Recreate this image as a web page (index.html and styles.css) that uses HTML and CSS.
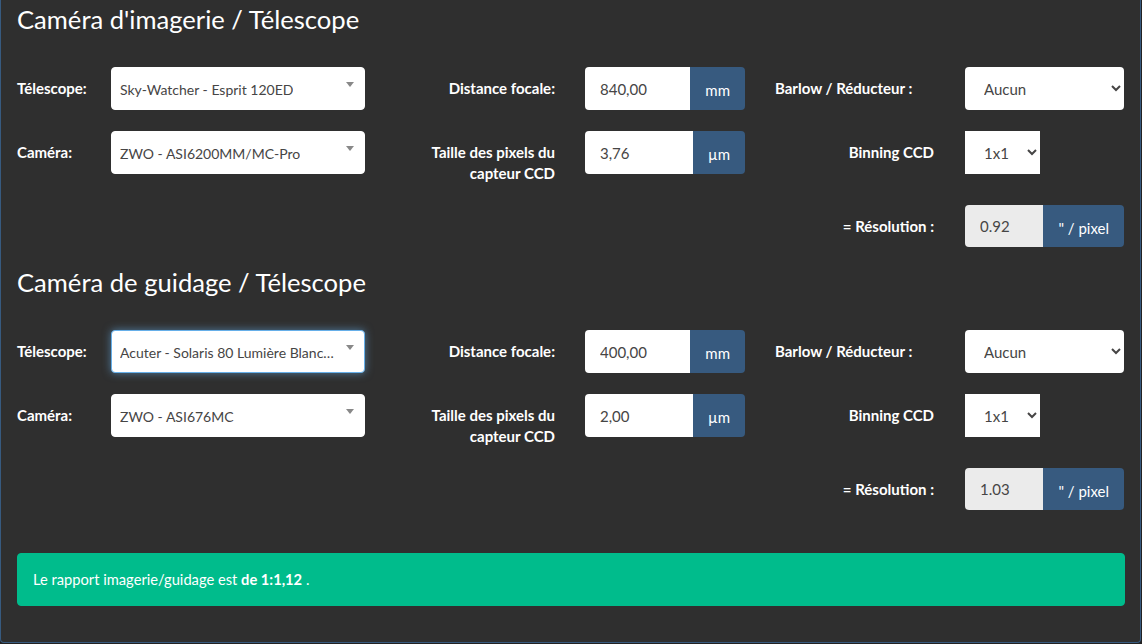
FILE: index.html
```html
<!DOCTYPE html>
<html lang="fr">
<head>
    <meta charset="UTF-8">
    <meta name="viewport" content="width=device-width, initial-scale=1.0">
    <title>Rapport imagerie / guidage</title>
    <link rel="stylesheet" href="styles.css">
</head>
<body>
    <div class="panel">
        <!-- Train d'imagerie -->
        <div class="section">
            <h3>Caméra d'imagerie / Télescope</h3>
            <div class="form-row">
                <label class="label-left">Télescope:</label>
                <div class="combo"><span class="combo-text">Sky-Watcher - Esprit 120ED</span><b class="combo-arrow"></b></div>
                <label class="label-mid">Distance focale:</label>
                <div class="input-group">
                    <input type="text" value="840,00">
                    <span class="addon">mm</span>
                </div>
                <label class="label-right label-barlow">Barlow / Réducteur :</label>
                <select class="select-full"><option>Aucun</option></select>
            </div>
            <div class="form-row">
                <label class="label-left">Caméra:</label>
                <div class="combo"><span class="combo-text">ZWO - ASI6200MM/MC-Pro</span><b class="combo-arrow"></b></div>
                <label class="label-mid">Taille des pixels du<br>capteur CCD</label>
                <div class="input-group">
                    <input type="text" value="3,76">
                    <span class="addon">µm</span>
                </div>
                <label class="label-right">Binning CCD</label>
                <div><select class="select-bin"><option>1x1</option></select></div>
            </div>
            <div class="form-row">
                <label class="label-right col-result">= Résolution :</label>
                <div class="input-group result">
                    <input type="text" value="0.92" readonly>
                    <span class="addon">" / pixel</span>
                </div>
            </div>
        </div>

        <!-- Train de guidage -->
        <div class="section">
            <h3>Caméra de guidage / Télescope</h3>
            <div class="form-row">
                <label class="label-left">Télescope:</label>
                <div class="combo focused"><span class="combo-text">Acuter - Solaris 80 Lumière Blanche (f/5)</span><b class="combo-arrow"></b></div>
                <label class="label-mid">Distance focale:</label>
                <div class="input-group">
                    <input type="text" value="400,00">
                    <span class="addon">mm</span>
                </div>
                <label class="label-right label-barlow">Barlow / Réducteur :</label>
                <select class="select-full"><option>Aucun</option></select>
            </div>
            <div class="form-row">
                <label class="label-left">Caméra:</label>
                <div class="combo"><span class="combo-text">ZWO - ASI676MC</span><b class="combo-arrow"></b></div>
                <label class="label-mid">Taille des pixels du<br>capteur CCD</label>
                <div class="input-group">
                    <input type="text" value="2,00">
                    <span class="addon">µm</span>
                </div>
                <label class="label-right">Binning CCD</label>
                <div><select class="select-bin"><option>1x1</option></select></div>
            </div>
            <div class="form-row">
                <label class="label-right col-result">= Résolution :</label>
                <div class="input-group result">
                    <input type="text" value="1.03" readonly>
                    <span class="addon">" / pixel</span>
                </div>
            </div>
        </div>

        <div class="alert-success">
            Le rapport imagerie/guidage est <strong>de 1:1,12</strong> .
        </div>
    </div>
</body>
</html>
```

FILE: styles.css
```css
body {
    margin: 0;
    background-color: #222;
    font-family: Lato, "Liberation Sans", sans-serif;
    color: #fff;
}
.panel {
    width: 1108px;
    padding: 5px 15px 36px 16px;
    background-color: #2f2f2f;
    border: 1px solid #375a7f;
    border-top: none;
    border-radius: 0 0 4px 4px;
}
.panel h3 {
    margin: 0 0 33px;
    font-size: 25.6px;
    font-weight: 400;
    line-height: 29px;
}
.form-row {
    display: grid;
    grid-template-columns: 94px 254px 220px 160px 220px 159px;
    align-items: start;
    margin-bottom: 21px;
}
.form-row label {
    padding-top: 11px;
    font-size: 15px;
    font-weight: 700;
    line-height: 21px;
}
.label-mid {
    text-align: right;
    padding-right: 30px;
}
.label-right {
    text-align: right;
    padding-right: 31px;
}
.label-barlow {
    text-align: left;
    padding-left: 30px;
    padding-right: 0;
}
.col-result {
    grid-column: 5;
}
.combo {
    position: relative;
    height: 43px;
    padding: 1px 28px 0 8px;
    display: flex;
    align-items: center;
    background-color: #fff;
    border: 1px solid #fff;
    border-radius: 4px;
    box-sizing: border-box;
    color: #464545;
    font-size: 14px;
}
.combo-text {
    white-space: nowrap;
    overflow: hidden;
    text-overflow: ellipsis;
}
.combo-arrow {
    position: absolute;
    top: 14px;
    right: 10px;
    border-style: solid;
    border-width: 5px 4px 0 4px;
    border-color: #888 transparent transparent transparent;
}
.combo.focused {
    border-color: #66afe9;
    box-shadow: 0 0 8px rgba(102, 175, 233, 0.6);
}
.input-group {
    display: flex;
    height: 43px;
}
.input-group input {
    flex: 1;
    min-width: 0;
    padding: 0 15px;
    border: none;
    border-radius: 4px 0 0 4px;
    background-color: #fff;
    color: #464545;
    font-family: inherit;
    font-size: 15px;
    outline: none;
}
.input-group .addon {
    display: flex;
    align-items: center;
    padding: 3px 15px 0;
    background-color: #375a7f;
    color: #fff;
    border-radius: 0 4px 4px 0;
    font-size: 15px;
    white-space: nowrap;
}
.input-group.result {
    grid-column: 6;
    height: 42px;
}
.input-group.result input {
    background-color: #ebebeb;
}
select {
    height: 43px;
    padding: 0 12px 0 15px;
    border: none;
    background-color: #fff;
    color: #464545;
    font-family: inherit;
    font-size: 15px;
}
.select-full {
    width: 100%;
    border-radius: 4px;
}
.select-bin {
    width: 75px;
    border-radius: 0;
}
.alert-success {
    margin-top: 43px;
    padding: 15px;
    background-color: #00bc8c;
    border: 1px solid #00bc8c;
    border-radius: 4px;
    font-size: 14.7px;
    line-height: 21px;
}
```
